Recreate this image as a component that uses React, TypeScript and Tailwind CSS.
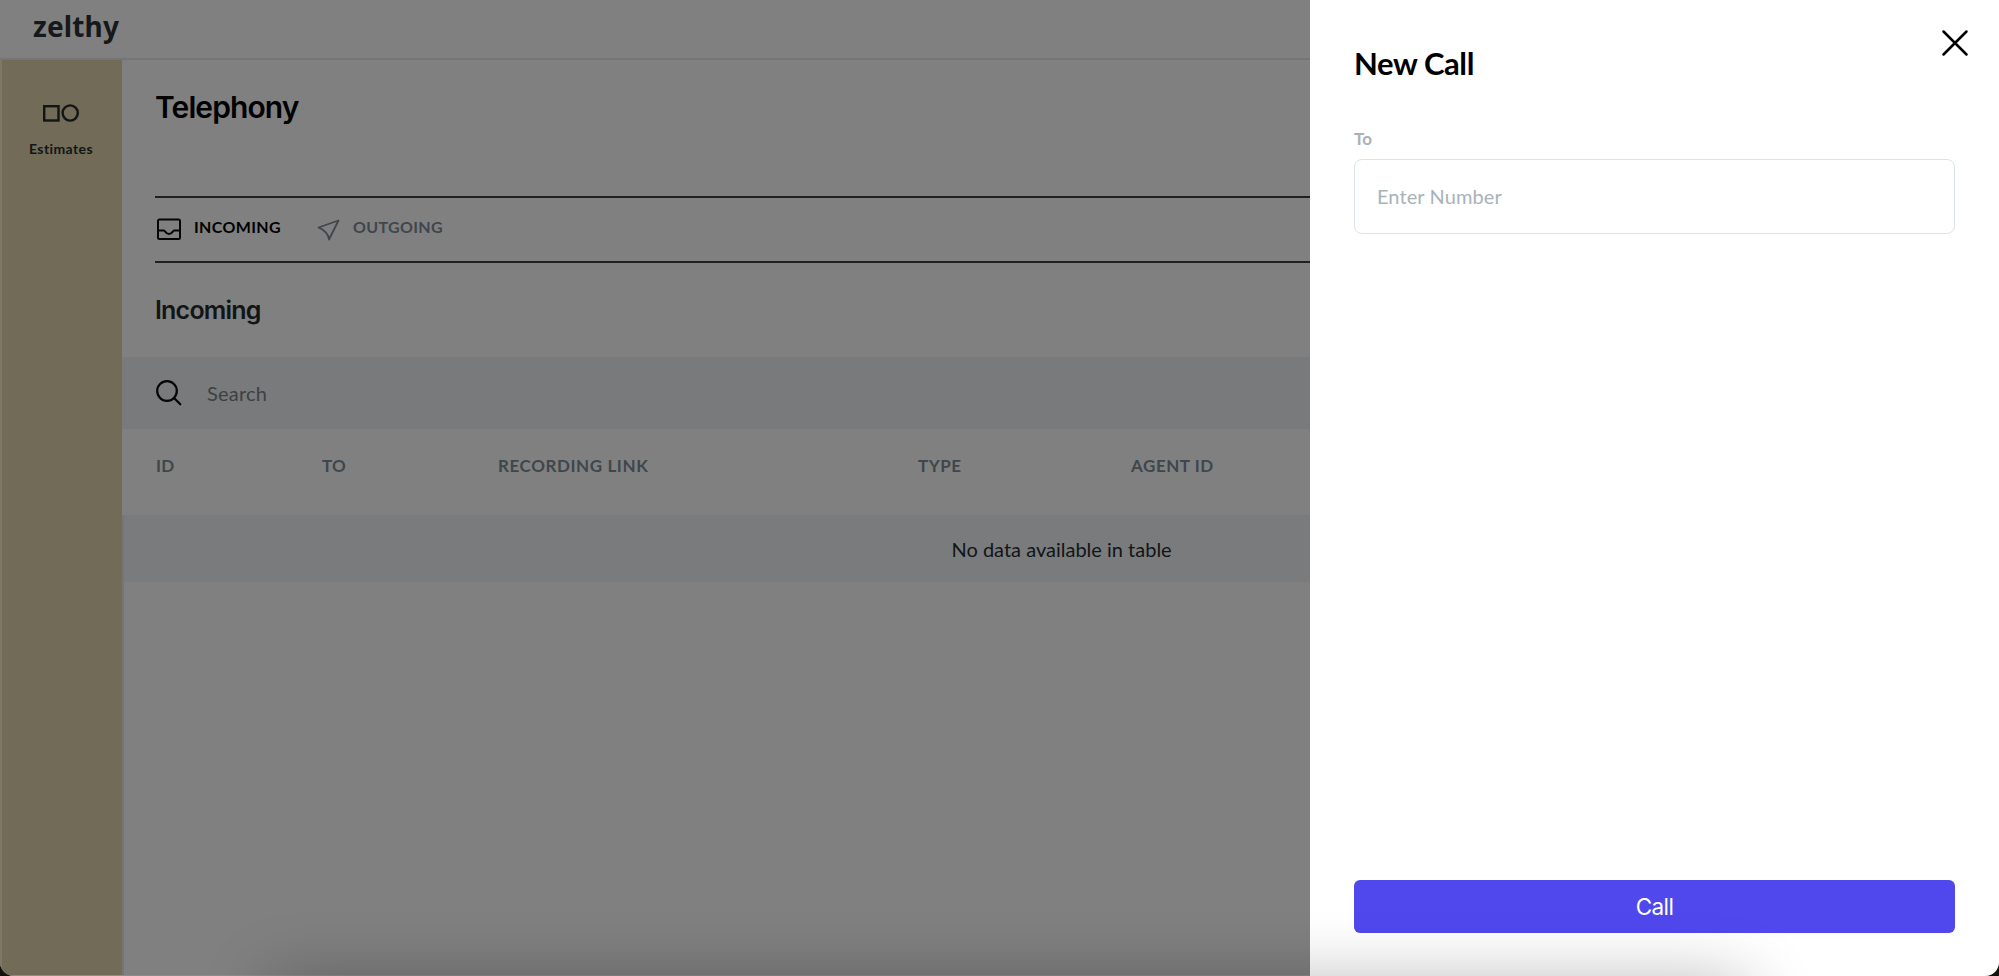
import React from "react";

const columns = [
  { label: "ID", cell: "w-[166px]", text: "tracking-[0.3px]" },
  { label: "TO", cell: "w-[176px]", text: "tracking-[0.3px]" },
  { label: "RECORDING LINK", cell: "w-[420px]", text: "tracking-[0.58px]" },
  { label: "TYPE", cell: "w-[213px]", text: "tracking-[0.5px]" },
  { label: "AGENT ID", cell: "w-[200px]", text: "tracking-[0.55px]" },
];

function Sidebar() {
  return (
    <aside className="flex w-[122px] shrink-0 flex-col items-center border-l-2 border-[#7d7967] bg-[#716b57] pt-[43px] pr-[2px]">
      <svg width="38" height="20" viewBox="0 0 38 20" fill="none" stroke="#121516" strokeWidth="2.4">
        <rect x="2.2" y="3.200" width="14.300" height="14.300" />
        <circle cx="28.200" cy="10" r="7.600" />
      </svg>
      <span className="mt-[14px] text-[14px] leading-[24px] font-bold tracking-[0.4px] text-[#121516]">Estimates</span>
    </aside>
  );
}

function Tabs() {
  return (
    <nav className="ml-[33px] flex h-[67px] items-start border-y-2 border-[#1d2122]">
      <div className="flex pt-[17px]">
        <svg className="mt-[3px]" width="26" height="24" viewBox="0 0 26 24" fill="none" stroke="#050505" strokeWidth="2">
          <rect x="3" y="1.500" width="22" height="19.500" rx="1.5" />
          <path d="M3 12.500h6c1.200 0 1.600 3.500 5 3.500s3.800-3.500 5-3.500h6" />
        </svg>
        <span className="ml-[13px] text-[16px] leading-[24px] font-bold tracking-[0.35px] text-black">INCOMING</span>
      </div>
      <div className="ml-[36px] flex pt-[17px]">
        <svg className="mt-[3px]" width="24" height="24" viewBox="0 0 24 24" fill="none" stroke="#3f464c" strokeWidth="1.8" strokeLinejoin="round">
          <path d="M1.500 9.500 21.500 2.500l-9.500 19c-.1-5-5-10-10.500-12Z" />
        </svg>
        <span className="ml-[12px] text-[16px] leading-[24px] font-bold tracking-[0.35px] text-[#40464c]">OUTGOING</span>
      </div>
    </nav>
  );
}

function Telephony() {
  return (
    <main className="flex min-w-0 flex-1 flex-col">
      <h1 className="mt-[27px] ml-[33px] font-['Inter'] text-[30px] leading-[40px] font-semibold tracking-[-0.9px] text-black">Telephony</h1>
      <div className="mt-[69px] flex flex-col">
        <Tabs />
      </div>
      <h2 className="mt-[29px] ml-[33px] font-['Inter'] text-[25px] leading-[36px] font-semibold tracking-[-0.8px] text-[#121516]">Incoming</h2>
      <div className="mt-[29px] flex h-[72px] items-center bg-[#787a7c] pl-[33px]">
        <svg width="28" height="28" viewBox="0 0 28 28" fill="none" stroke="#050505" strokeWidth="2.200" strokeLinecap="round">
          <circle cx="12" cy="12" r="9.800" />
          <path d="m19.300 19.300 6 6" />
        </svg>
        <span className="ml-[24px] text-[20px] tracking-[0.2px] text-[#3e4142]">Search</span>
      </div>
      <div className="flex h-[86px] pt-[24px] pl-[34px]">
        {columns.map((c) => (
          <div key={c.label} className={`${c.cell} shrink-0 text-[17px] leading-[26px] font-bold text-[#3f464c] ${c.text}`}>
            {c.label}
          </div>
        ))}
      </div>
      <div className="flex flex-1 flex-col border-l-2 border-[#737577]">
        <div className="flex h-[67px] items-center bg-[#7a7b7d] pl-[827.5px] text-[20px] text-[#121516]">No data available in table</div>
      </div>
    </main>
  );
}

function NewCallDrawer() {
  return (
    <section className="flex w-[689px] shrink-0 flex-col bg-white pr-[44px] pb-[43px] pl-[44px]">
      <header className="flex h-[128px] justify-between">
        <h2 className="mt-[43px] text-[31px] leading-[40px] font-bold tracking-[-0.4px] text-black">New Call</h2>
        <svg className="mt-[28px] -mr-[16px]" width="32" height="32" viewBox="0 0 32 32" fill="none" stroke="black" strokeWidth="2.500" strokeLinecap="round">
          <path d="M4.500 3.500 27.500 26.500M27.500 3.500 4.500 26.500" />
        </svg>
      </header>
      <label className="text-[17px] leading-[22px] font-bold tracking-[0.2px] text-[#a9b2b9]">To</label>
      <div className="mt-[9px] flex h-[75px] items-center rounded-[8px] border border-[#dde4e8] pb-px pl-[22px] text-[20px] tracking-[0.1px] text-[#a9b2b9]">
        Enter Number
      </div>
      <button className="mt-auto h-[53px] rounded-[6px] bg-[#5048ed] font-['Inter'] text-[22.5px] tracking-[-0.6px] text-white">Call</button>
    </section>
  );
}

export default function App() {
  return (
    <div className="relative h-[976px] w-[1999px] overflow-hidden bg-[#14120c] font-['Lato',sans-serif]">
      <div className="flex h-[976px] overflow-hidden rounded-b-[14px] bg-[#808080]">
        <div className="flex w-[1310px] shrink-0 flex-col overflow-hidden border-b border-[#8c8c8c]">
          <header className="h-[60px] shrink-0 border-b-2 border-[#757575] pl-[33px]">
            <div className="pt-[6px] font-['Noto_Sans'] text-[28px] leading-[40px] font-bold tracking-[0.15px] text-[#16191b]">zelthy</div>
          </header>
          <div className="flex min-h-0 flex-1">
            <Sidebar />
            <Telephony />
          </div>
        </div>
        <NewCallDrawer />
      </div>
      <div className="pointer-events-none absolute top-[985px] left-[270px] h-[60px] w-[1475px] shadow-[0_0_70px_rgba(0,0,0,0.32)]" />
    </div>
  );
}
